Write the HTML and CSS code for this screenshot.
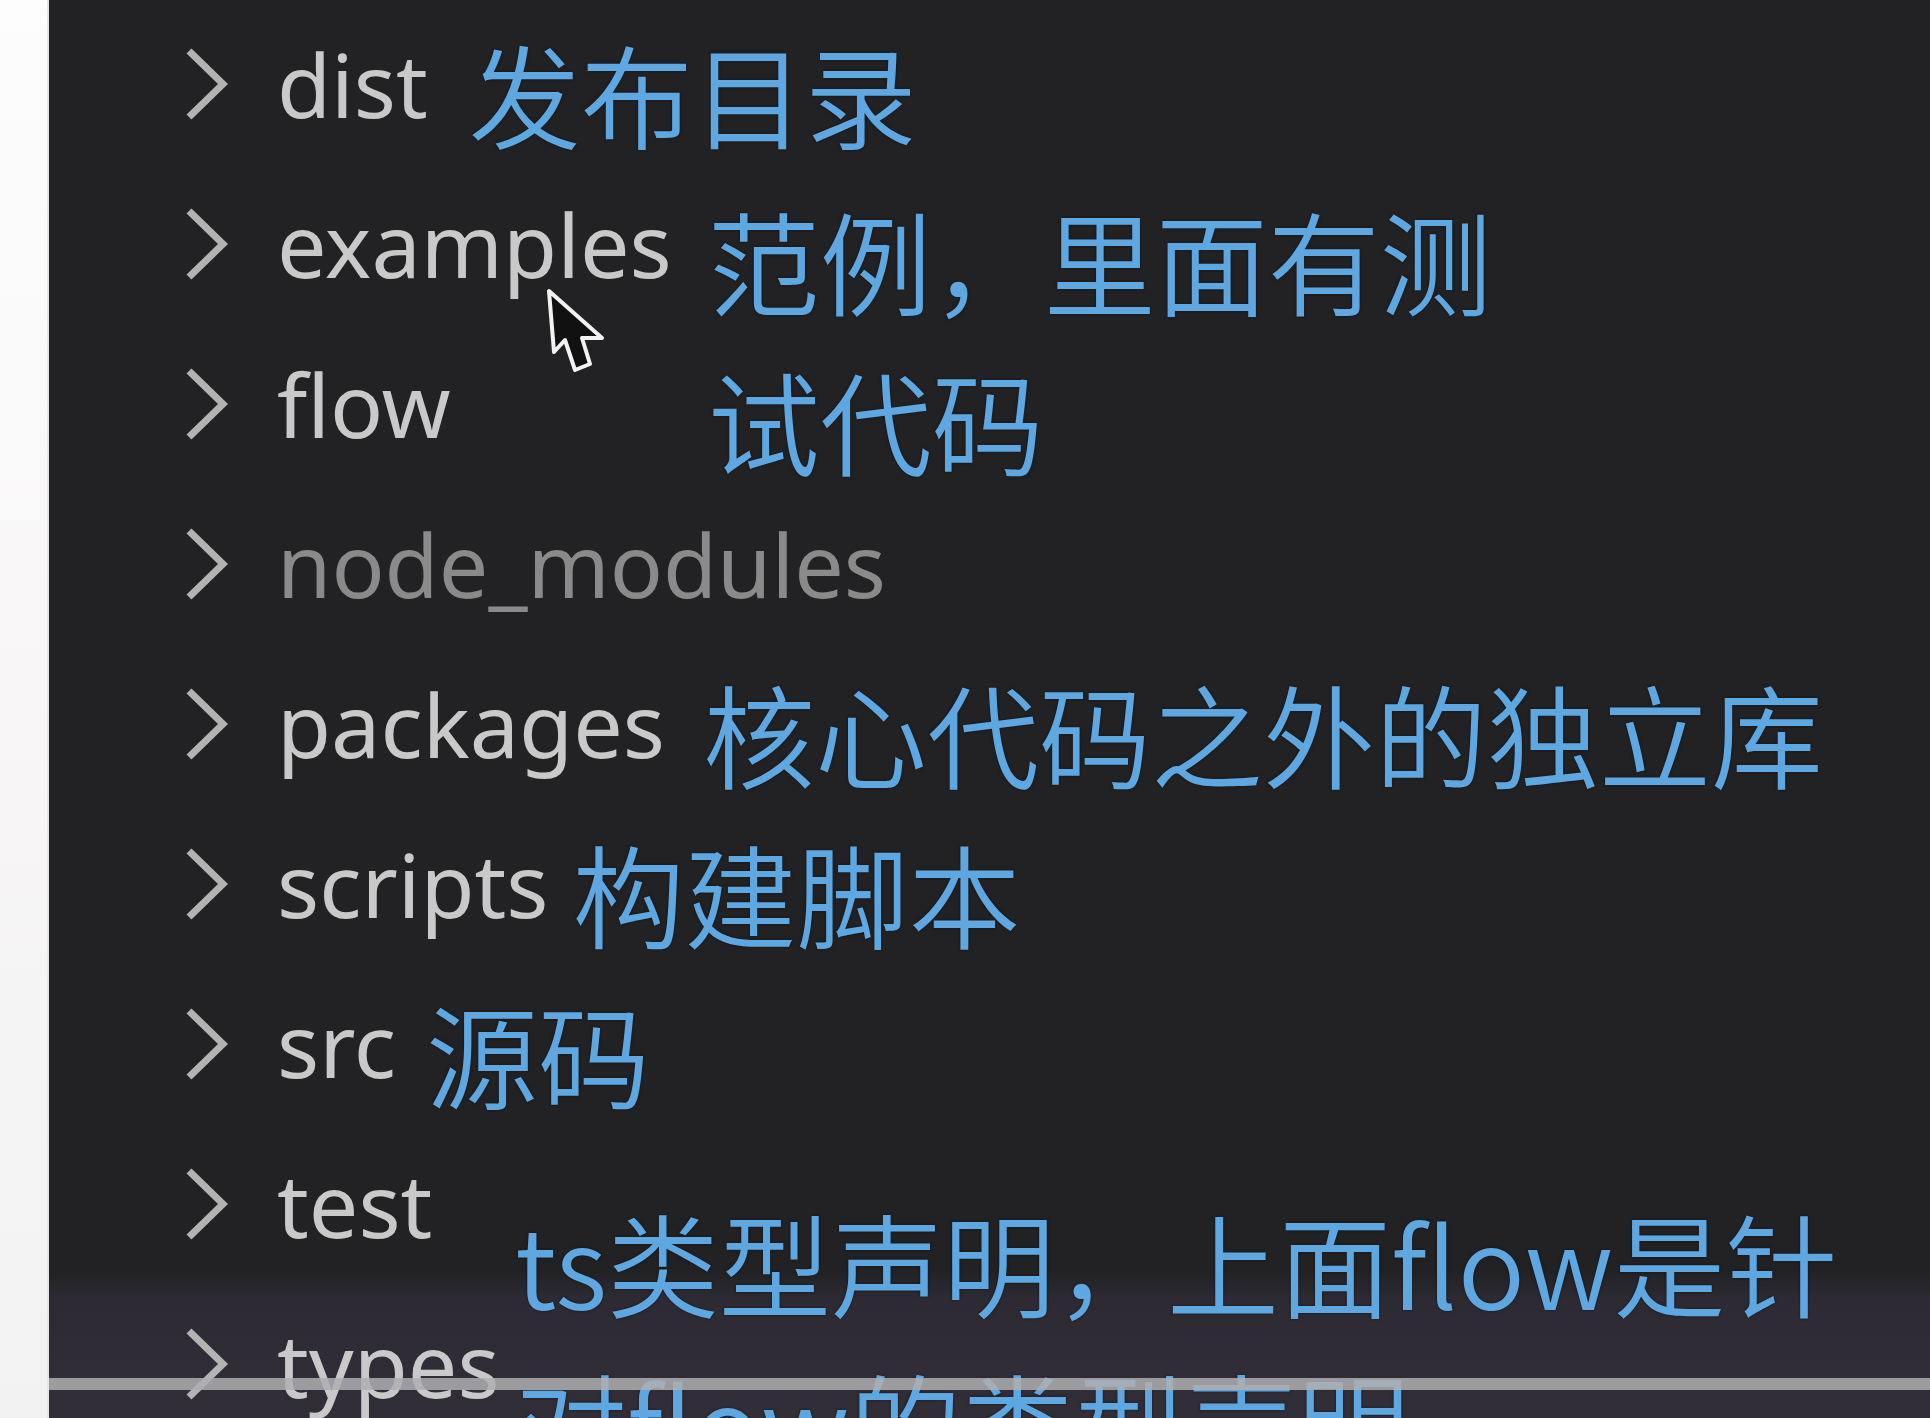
FILE: index.html
```html
<!DOCTYPE html>
<html lang="zh-CN">
<head>
<meta charset="utf-8">
<title>Vue 源码目录结构</title>
<link rel="stylesheet" href="styles.css">
</head>
<body>
<div class="screen">
  <div class="gutter"></div>
  <div class="explorer">
    <ul class="tree">
      <li class="row">
        <svg class="chev" viewBox="0 0 48 76"><polyline points="7,5 41,38 7,71"/></svg>
        <span class="name">dist</span>
        <span class="note note--wide">发布目录</span>
      </li>
      <li class="row">
        <svg class="chev" viewBox="0 0 48 76"><polyline points="7,5 41,38 7,71"/></svg>
        <span class="name">examples</span>
        <span class="note note--low">范例，里面有测<br>试代码</span>
      </li>
      <li class="row">
        <svg class="chev" viewBox="0 0 48 76"><polyline points="7,5 41,38 7,71"/></svg>
        <span class="name">flow</span>
      </li>
      <li class="row">
        <svg class="chev" viewBox="0 0 48 76"><polyline points="7,5 41,38 7,71"/></svg>
        <span class="name name--ignored">node_modules</span>
      </li>
      <li class="row">
        <svg class="chev" viewBox="0 0 48 76"><polyline points="7,5 41,38 7,71"/></svg>
        <span class="name">packages</span>
        <span class="note">核心代码之外的独立库</span>
      </li>
      <li class="row">
        <svg class="chev" viewBox="0 0 48 76"><polyline points="7,5 41,38 7,71"/></svg>
        <span class="name">scripts</span>
        <span class="note note--tight">构建脚本</span>
      </li>
      <li class="row">
        <svg class="chev" viewBox="0 0 48 76"><polyline points="7,5 41,38 7,71"/></svg>
        <span class="name">src</span>
        <span class="note note--src">源码</span>
      </li>
      <li class="row">
        <svg class="chev" viewBox="0 0 48 76"><polyline points="7,5 41,38 7,71"/></svg>
        <span class="name">test</span>
      </li>
      <li class="row">
        <svg class="chev" viewBox="0 0 48 76"><polyline points="7,5 41,38 7,71"/></svg>
        <span class="name">types</span>
      </li>
    </ul>
    <div class="caption">ts类型声明，上面flow是针<br>对flow的类型声明</div>
    <div class="progress"></div>
    <svg class="cursor" viewBox="0 0 70 92"><polygon points="7,7 12,68 23,56 33,86 48,80 40,54 60,54"/></svg>
  </div>
</div>
</body>
</html>
```
FILE: styles.css
```css
html, body {
  margin: 0;
  height: 100%;
  overflow: hidden;
}

body {
  background: #ffffff;
  font-family: "Noto Sans", "Open Sans", sans-serif;
}

.screen {
  display: flex;
  height: 100vh;
}

.gutter {
  flex: none;
  width: 47px;
  background: linear-gradient(to bottom, #fdfdfd 0, #f8f6f7 50%, #f2f2f2 100%);
  border-right: 2px solid #e6e6e6;
}

.explorer {
  flex: 1;
  position: relative;
  overflow: hidden;
  background: linear-gradient(to bottom, #222225 0, #222225 1272px, #2d2a33 1298px, #312e38 100%);
}

.tree {
  list-style: none;
  margin: 0;
  padding: 4px 0 0 133px;
}

.row {
  display: flex;
  align-items: center;
  height: 160px;
}

.chev {
  flex: none;
  width: 48px;
  height: 76px;
  margin-right: 47px;
}

.chev polyline {
  fill: none;
  stroke: #b3b3b3;
  stroke-width: 7;
  stroke-linejoin: miter;
}

.name {
  font-size: 88px;
  line-height: 1;
  color: #c9c9c9;
  white-space: nowrap;
}

.name--ignored {
  color: #8a8a8a;
}

.note {
  align-self: flex-start;
  margin-top: 8px;
  margin-left: 38px;
  font-family: "Noto Sans CJK SC", sans-serif;
  font-weight: 350;
  font-size: 112px;
  line-height: 160px;
  color: #5ea7e0;
  white-space: nowrap;
  text-shadow: 0 0 3px rgba(0, 0, 0, 0.5);
}

.note--wide {
  margin-left: 41px;
}

.note--low {
  margin-top: 15px;
  margin-left: 36px;
}

.note--tight {
  margin-left: 24px;
}

.note--src {
  margin-left: 30px;
}

.caption {
  position: absolute;
  left: 466px;
  top: 1181px;
  font-family: "Noto Sans CJK SC", sans-serif;
  font-weight: 350;
  font-size: 112px;
  line-height: 160px;
  color: #5ea7e0;
  white-space: nowrap;
  text-shadow: 0 0 3px rgba(0, 0, 0, 0.5);
}

.progress {
  position: absolute;
  left: 0;
  right: 0;
  top: 1378px;
  height: 12px;
  background: rgba(175, 175, 178, 0.86);
}

.cursor {
  position: absolute;
  left: 493px;
  top: 284px;
  width: 70px;
  height: 92px;
}

.cursor polygon {
  fill: #111111;
  stroke: #f2f2f2;
  stroke-width: 4;
  stroke-linejoin: round;
}
```
